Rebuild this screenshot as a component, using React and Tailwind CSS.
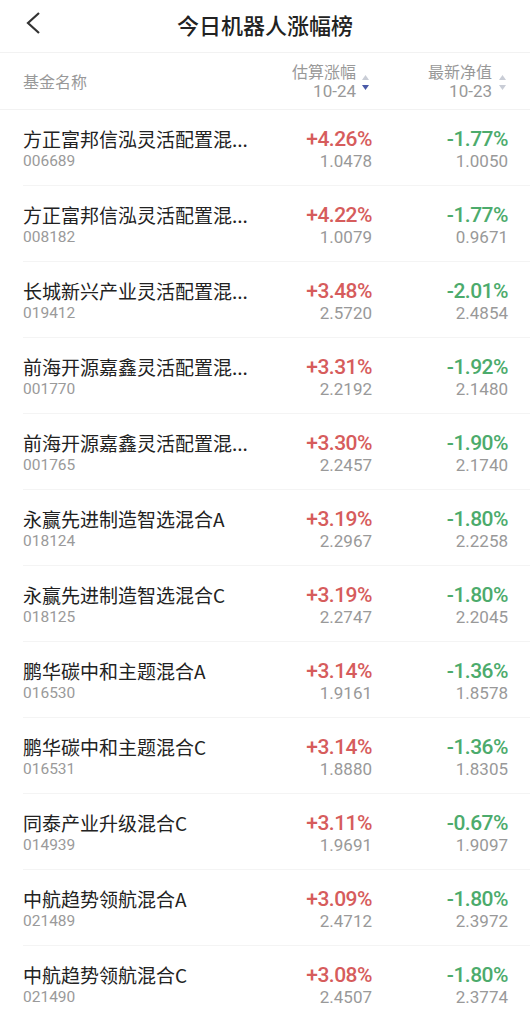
import React from "react";

const rows = [
  ["方正富邦信泓灵活配置混...", "006689", "+4.26%", "1.0478", "-1.77%", "1.0050"],
  ["方正富邦信泓灵活配置混...", "008182", "+4.22%", "1.0079", "-1.77%", "0.9671"],
  ["长城新兴产业灵活配置混...", "019412", "+3.48%", "2.5720", "-2.01%", "2.4854"],
  ["前海开源嘉鑫灵活配置混...", "001770", "+3.31%", "2.2192", "-1.92%", "2.1480"],
  ["前海开源嘉鑫灵活配置混...", "001765", "+3.30%", "2.2457", "-1.90%", "2.1740"],
  ["永赢先进制造智选混合A", "018124", "+3.19%", "2.2967", "-1.80%", "2.2258"],
  ["永赢先进制造智选混合C", "018125", "+3.19%", "2.2747", "-1.80%", "2.2045"],
  ["鹏华碳中和主题混合A", "016530", "+3.14%", "1.9161", "-1.36%", "1.8578"],
  ["鹏华碳中和主题混合C", "016531", "+3.14%", "1.8880", "-1.36%", "1.8305"],
  ["同泰产业升级混合C", "014939", "+3.11%", "1.9691", "-0.67%", "1.9097"],
  ["中航趋势领航混合A", "021489", "+3.09%", "2.4712", "-1.80%", "2.3972"],
  ["中航趋势领航混合C", "021490", "+3.08%", "2.4507", "-1.80%", "2.3774"],
];

function SortArrows({ active }) {
  return (
    <svg width="7" height="16" viewBox="0 0 7 16" className="block">
      <polygon points="3.5,0 7,5 0,5" fill="#c9cdd6" />
      <polygon points="0,10 7,10 3.5,15" fill={active ? "#4a5aa8" : "#c9cdd6"} />
    </svg>
  );
}

export default function App() {
  return (
    <div className="w-[530px] h-[1009px] overflow-hidden bg-white font-['Roboto','Noto_Sans_CJK_SC',sans-serif]">
      <div className="relative h-[53px] border-b border-[#f2f2f2] flex items-center justify-center">
        <svg width="20" height="24" viewBox="0 0 20 24" className="absolute left-[24px] top-[11px]">
          <polyline points="15,2 4,12 15,22" fill="none" stroke="#333" strokeWidth="2.2" />
        </svg>
        <div className="text-[22px] font-medium text-[#222] font-['Noto_Sans_CJK_SC',sans-serif] leading-none mt-[-4px]">
          今日机器人涨幅榜
        </div>
      </div>
      <div className="h-[57px] border-b border-[#f2f2f2] flex items-center pl-[23px] pr-[22px]">
        <div className="flex-1 text-[16px] text-[#999] font-['Noto_Sans_CJK_SC',sans-serif]">基金名称</div>
        <div className="w-[118px] flex items-center justify-end pr-[3px] gap-[6px]">
          <div className="flex flex-col items-end text-[16px] leading-[20px] text-[#999]">
            <span className="font-['Noto_Sans_CJK_SC',sans-serif]">估算涨幅</span>
            <span className="text-[17px]">10-24</span>
          </div>
          <div className="mt-[4px]"><SortArrows active /></div>
        </div>
        <div className="w-[136px] flex items-center justify-end pr-[2px] gap-[7px]">
          <div className="flex flex-col items-end text-[16px] leading-[20px] text-[#999]">
            <span className="font-['Noto_Sans_CJK_SC',sans-serif]">最新净值</span>
            <span className="text-[17px]">10-23</span>
          </div>
          <div className="mt-[4px]"><SortArrows /></div>
        </div>
      </div>
      <div>
        {rows.map((r) => (
          <div key={r[1]} className="ml-[23px] h-[76px] border-b border-[#f4f4f4] flex pr-[22px] pt-[17px]">
            <div className="flex-1 min-w-0">
              <div className="whitespace-nowrap text-[19px] leading-[24px] text-[#222] font-['Noto_Sans_CJK_SC',sans-serif]">{r[0]}</div>
              <div className="text-[15.5px] leading-[20px] text-[#9a9a9a]">{r[1]}</div>
            </div>
            <div className="w-[118px] text-right">
              <div className="text-[21px] leading-[24px] font-medium tracking-[-0.5px] text-[#d65c5c]">{r[2]}</div>
              <div className="text-[17px] leading-[20px] text-[#999]">{r[3]}</div>
            </div>
            <div className="w-[136px] text-right">
              <div className="text-[21px] leading-[24px] font-medium tracking-[-0.5px] text-[#4cab6c]">{r[4]}</div>
              <div className="text-[17px] leading-[20px] text-[#999]">{r[5]}</div>
            </div>
          </div>
        ))}
      </div>
    </div>
  );
}
